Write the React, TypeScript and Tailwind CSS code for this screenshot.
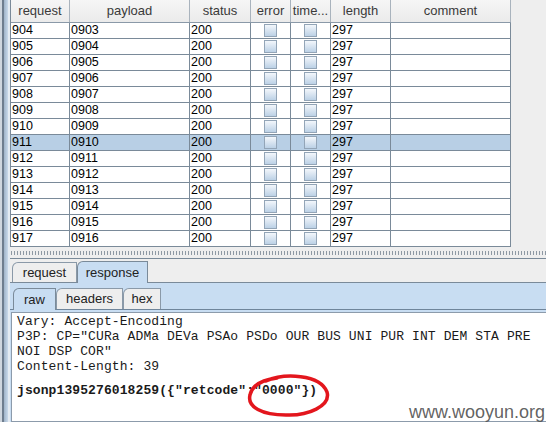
const rows = Array.from({ length: 14 }, (_, i) => ({
  request: String(904 + i),
  payload: "0" + String(903 + i),
}));

const cols = ["request", "payload", "status", "error", "time...", "length", "comment"];
const grid = "grid grid-cols-[59px_120px_61px_40px_40px_60px_120px]";

const Check = () => (
  <div className="flex h-full items-center justify-center">
    <div className="h-[13px] w-[13px] border border-[#93a5b7] bg-[linear-gradient(#f3f7fb,#bcd1e6)]" />
  </div>
);

const lines = [
  "Vary: Accept-Encoding",
  'P3P: CP="CURa ADMa DEVa PSAo PSDo OUR BUS UNI PUR INT DEM STA PRE',
  'NOI DSP COR"',
  "Content-Length: 39",
];

export default function App() {
  return (
    <div className="relative flex h-[422px] w-[546px] overflow-hidden bg-[#eeeeee] font-['Liberation_Sans',Arial,sans-serif] text-black">
      {/* window edge */}
      <div className="w-[10px] shrink-0 bg-[linear-gradient(to_right,#cfd6de_0,#cfd6de_2px,#6e7d8e_2px,#6e7d8e_4px,#9fb3c8_4px,#c9d9ea_8px,#e4ebf2_8px)]" />

      <div className="flex min-w-0 flex-1 flex-col">
        {/* table */}
        <div className="h-[247px] shrink-0">
          <div className="w-[501px] border-l border-[#7a8a99]">
            <div className={`${grid} h-[23px] border-b border-[#8a99a8] bg-[linear-gradient(#f6f6f6,#ebebeb)]`}>
              {cols.map((c) => (
                <div
                  key={c}
                  className="flex items-center justify-center border-r border-[#a9b3bd] text-[13px] text-[#3a3a3a]"
                >
                  {c}
                </div>
              ))}
            </div>
            {rows.map((r, i) => (
              <div
                key={r.request}
                className={`${grid} h-[16px] text-[12.5px] leading-[15px] ${i === 7 ? "bg-[#b8cfe5]" : "bg-white"}`}
              >
                <div className="border-r border-b border-[#7a8a99] pl-[1px]">{r.request}</div>
                <div className="border-r border-b border-[#7a8a99] pl-[1px]">{r.payload}</div>
                <div className="border-r border-b border-[#7a8a99] pl-[1px]">200</div>
                <div className="border-r border-b border-[#7a8a99]"><Check /></div>
                <div className="border-r border-b border-[#7a8a99]"><Check /></div>
                <div className="border-r border-b border-[#7a8a99] pl-[1px]">297</div>
                <div className="border-r border-b border-[#7a8a99]" />
              </div>
            ))}
          </div>
        </div>

        {/* split divider */}
        <div className="flex h-[11px] shrink-0 items-center">
          <div className="h-[4px] w-full bg-[radial-gradient(circle,#8e99a4_0.8px,transparent_1px)] bg-[length:3px_2px]" />
        </div>

        {/* outer tabs */}
        <div className="flex h-[24px] shrink-0 items-end border-t border-[#7a8a99] pl-[2px]">
          <div className="flex h-[20px] w-[65px] items-center justify-center rounded-tl-[6px] border border-b-0 border-[#8a99a8] bg-[#eeeeee] text-[13px] text-[#222]">
            request
          </div>
          <div className="relative z-10 -mb-px flex h-[22px] w-[71px] items-center justify-center rounded-tl-[6px] border border-b-0 border-[#7a8a99] bg-[#c8ddf2] text-[13px] text-[#222]">
            response
          </div>
        </div>

        {/* response panel */}
        <div className="flex min-h-0 flex-1 flex-col border-t border-[#7a8a99] bg-[#c8ddf2]">
          <div className="flex h-[27px] shrink-0 items-end border-b border-[#6f859b] pl-[3px]">
            <div className="relative z-10 -mb-px flex h-[22px] w-[43px] items-center justify-center rounded-tl-[6px] border border-b-0 border-[#7a8a99] bg-[#c8ddf2] text-[13px] text-[#222]">
              raw
            </div>
            <div className="flex h-[21px] w-[67px] items-center justify-center rounded-tl-[6px] border border-b-0 border-[#8a99a8] bg-[#eeeeee] text-[13px] text-[#222]">
              headers
            </div>
            <div className="flex h-[21px] w-[38px] items-center justify-center rounded-tl-[6px] border border-b-0 border-[#8a99a8] bg-[#eeeeee] text-[13px] text-[#222]">
              hex
            </div>
          </div>
          <div className="flex min-h-0 flex-1 pt-[2px] pl-[1px]">
            <div className="min-w-0 flex-1 border-t border-l border-b border-[#8c9bab] bg-white pt-[1px] pl-[5px] font-['Liberation_Mono','Courier_New',monospace] text-[13px] leading-[15px] tracking-[0.1px] text-[#1a1a1a] whitespace-pre">
              {lines.map((l) => (
                <div key={l}>{l}</div>
              ))}
              <div className="mt-[9px] font-bold">{'jsonp1395276018259({"retcode":"0000"})'}</div>
            </div>
          </div>
        </div>
      </div>

      {/* red annotation */}
      <svg
        className="absolute left-[244px] top-[372px]"
        width="88"
        height="48"
        viewBox="0 0 88 48"
        fill="none"
      >
        <path
          d="M22 9 C40 1 76 2 83 20 C87 34 64 44 42 43 C18 43 3 35 6 23 C8 13 17 8 33 6"
          stroke="#e3161d"
          strokeWidth="3.5"
          strokeLinecap="round"
        />
      </svg>

      {/* watermark */}
      <div className="absolute right-[1px] bottom-[1px] text-[18px] leading-none text-[#505050]/90">
        www.wooyun.org
      </div>
    </div>
  );
}
